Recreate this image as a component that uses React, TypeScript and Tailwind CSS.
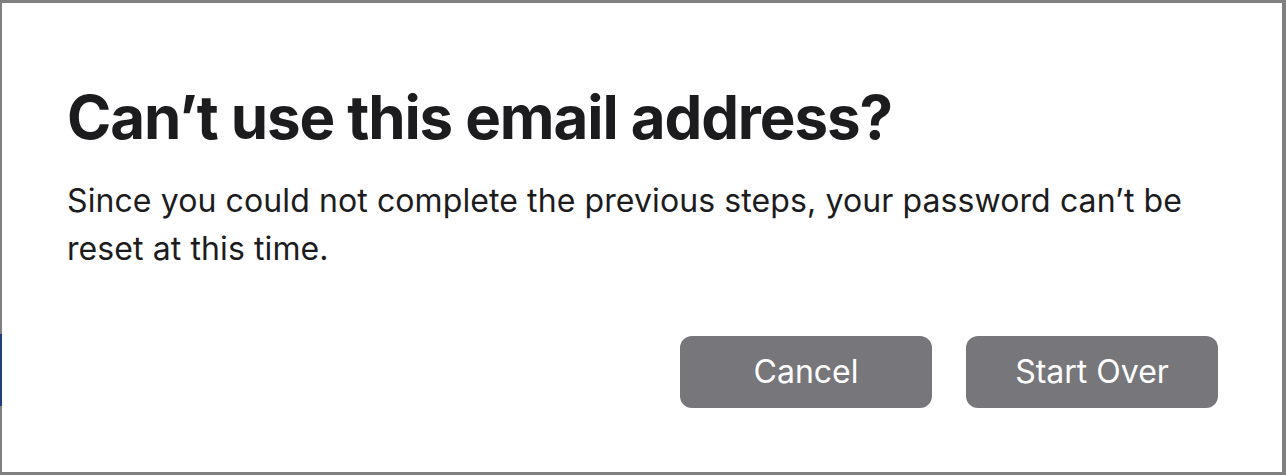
export default function App() {
  return (
    <div className="w-[1286px] h-[475px] bg-[#808080] pt-[3px] pl-[2px] pr-[4px] pb-[3px] flex relative overflow-hidden">
      {/* bits of the page underneath peeking past the dialog */}
      <div className="absolute left-0 top-[334px] w-[2px] h-[72px] bg-[#1d3f7c]" />
      <div className="flex-1 bg-white flex flex-col pl-[65px] pr-[64px] pt-[78px] pb-[64px]" style={{ fontFamily: 'Inter, "Noto Sans", sans-serif' }}>
        <h1 className="text-[60px] leading-[72px] font-bold text-[#1c1c1e] tracking-[-1.1px]">
          Can’t use this email address?
        </h1>
        <p className="mt-[24px] text-[32px] leading-[48px] text-[#1c1c1e] tracking-[0.1px]">
          Since you could not complete the previous steps, your password can’t be reset at this time.
        </p>
        <div className="mt-auto flex justify-end gap-[34px]">
          <button className="w-[252px] h-[72px] rounded-[12px] bg-[#77767b] text-white text-[32px]">
            Cancel
          </button>
          <button className="w-[252px] h-[72px] rounded-[12px] bg-[#77767b] text-white text-[32px]">
            Start Over
          </button>
        </div>
      </div>
    </div>
  )
}
